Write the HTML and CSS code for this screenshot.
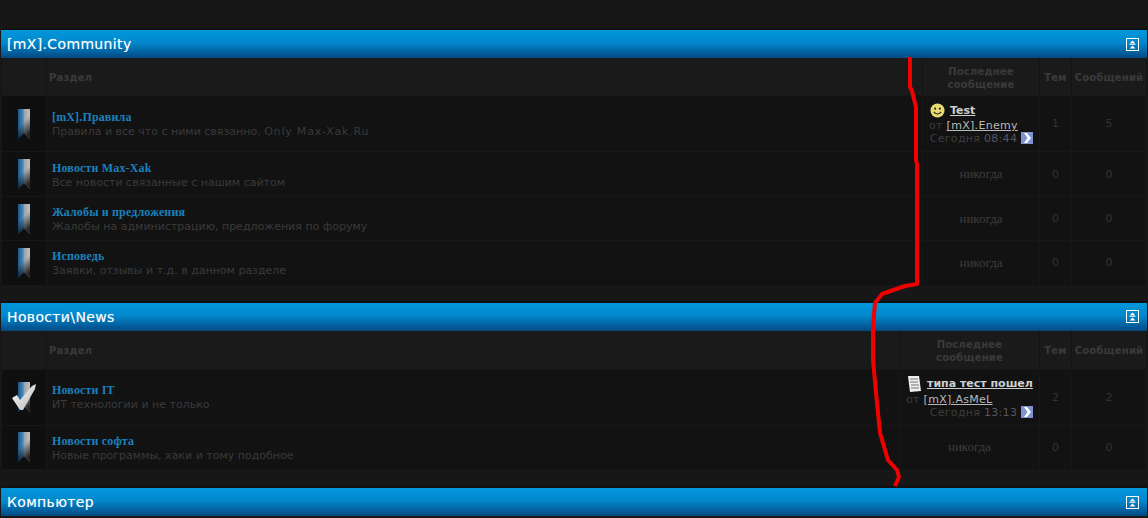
FILE: index.html
```html
<!DOCTYPE html>
<html lang="ru">

<head>
  <meta charset="UTF-8" />
  <title>Форум</title>
  <link rel="stylesheet" href="styles.css">
</head>

<body>
  <svg class="defs" width="0" height="0">
    <defs>
      <linearGradient id="ribbon" x1="0" x2="1" y1="0" y2="0">
        <stop offset="0" stop-color="#17578a" />
        <stop offset="0.42" stop-color="#5288b4" />
        <stop offset="0.55" stop-color="#9aa8b2" />
        <stop offset="1" stop-color="#c0c0c0" />
      </linearGradient>
      <linearGradient id="ribbonFade" x1="0.1" x2="0.45" y1="0.1" y2="1">
        <stop offset="0.45" stop-color="#000" stop-opacity="0" />
        <stop offset="1" stop-color="#000" stop-opacity="0.8" />
      </linearGradient>
      <linearGradient id="checkFill" x1="0" x2="1" y1="0" y2="1">
        <stop offset="0" stop-color="#ffffff" />
        <stop offset="1" stop-color="#b5b5b5" />
      </linearGradient>
      <symbol id="forum-icon" viewBox="0 0 14 30">
        <path d="M1 0H13V30L7 24L1 30Z" fill="url(#ribbon)" />
        <path d="M1 0H13V30L7 24L1 30Z" fill="url(#ribbonFade)" />
      </symbol>
      <symbol id="collapse-icon" viewBox="0 0 13 13">
        <rect x="0.5" y="0.5" width="12" height="12" fill="none" stroke="#fff" />
        <path d="M6.5 2.5L9.5 5.5H3.5ZM3.5 6.2H9.5V7H3.5ZM6.5 7.6L9.5 10.5H3.5Z" fill="#fff" />
      </symbol>
      <symbol id="go-icon" viewBox="0 0 12 12">
        <rect width="12" height="12" fill="#7f93d0" />
        <path d="M3 1H6L10 6L6 11H3L6.5 6Z" fill="#fff" />
      </symbol>
    </defs>
  </svg>

  <section class="category">
    <header class="category-title">
      <h2>[mX].Community</h2>
      <svg class="collapse"><use href="#collapse-icon" /></svg>
    </header>
    <table class="forums">
      <colgroup>
        <col class="col-icon"><col><col class="col-last"><col class="col-topics"><col class="col-posts">
      </colgroup>
      <thead>
        <tr>
          <th></th>
          <th class="th-name">Раздел</th>
          <th>Последнее сообщение</th>
          <th>Тем</th>
          <th>Сообщений</th>
        </tr>
      </thead>
      <tbody>
        <tr class="row-tall">
          <td class="cell-icon"><svg class="ribbon"><use href="#forum-icon" /></svg></td>
          <td class="cell-name">
            <a class="forum-link" href="#">[mX].Правила</a>
            <div class="forum-desc">Правила и все что с ними связанно. <span class="latin">Only Max-Xak.Ru</span></div>
          </td>
          <td class="cell-last">
            <div class="last-title">
              <svg class="smile" viewBox="0 0 16 16">
                <circle cx="8" cy="8" r="7.5" fill="#e8dc70" />
                <circle cx="5.5" cy="6" r="1.1" fill="#222" />
                <circle cx="10.5" cy="6" r="1.1" fill="#222" />
                <path d="M4 9.5Q8 14 12 9.5" fill="none" stroke="#222" stroke-width="1.2" />
              </svg>
              <a class="last-topic" href="#">Test</a>
            </div>
            <div class="last-by">от <a href="#">[mX].Enemy</a></div>
            <div class="last-date">Сегодня <span class="time">08:44</span> <svg class="go"><use href="#go-icon" /></svg></div>
          </td>
          <td class="cell-num">1</td>
          <td class="cell-num">5</td>
        </tr>
        <tr class="row-a">
          <td class="cell-icon"><svg class="ribbon"><use href="#forum-icon" /></svg></td>
          <td class="cell-name">
            <a class="forum-link" href="#">Новости Max-Xak</a>
            <div class="forum-desc">Все новости связанные с нашим сайтом</div>
          </td>
          <td class="cell-never">никогда</td>
          <td class="cell-num">0</td>
          <td class="cell-num">0</td>
        </tr>
        <tr class="row-b">
          <td class="cell-icon"><svg class="ribbon"><use href="#forum-icon" /></svg></td>
          <td class="cell-name">
            <a class="forum-link" href="#">Жалобы и предложения</a>
            <div class="forum-desc">Жалобы на администрацию, предложения по форуму</div>
          </td>
          <td class="cell-never">никогда</td>
          <td class="cell-num">0</td>
          <td class="cell-num">0</td>
        </tr>
        <tr class="row-b">
          <td class="cell-icon"><svg class="ribbon"><use href="#forum-icon" /></svg></td>
          <td class="cell-name">
            <a class="forum-link" href="#">Исповедь</a>
            <div class="forum-desc">Заявки, отзывы и т.д. в данном разделе</div>
          </td>
          <td class="cell-never">никогда</td>
          <td class="cell-num">0</td>
          <td class="cell-num">0</td>
        </tr>
      </tbody>
    </table>
  </section>

  <section class="category category-news">
    <header class="category-title">
      <h2>Новости\News</h2>
      <svg class="collapse"><use href="#collapse-icon" /></svg>
    </header>
    <table class="forums forums-wide">
      <colgroup>
        <col class="col-icon"><col><col class="col-last"><col class="col-topics"><col class="col-posts">
      </colgroup>
      <thead>
        <tr>
          <th></th>
          <th class="th-name">Раздел</th>
          <th>Последнее сообщение</th>
          <th>Тем</th>
          <th>Сообщений</th>
        </tr>
      </thead>
      <tbody>
        <tr class="row-tall">
          <td class="cell-icon">
            <div class="icon-read">
              <svg class="ribbon"><use href="#forum-icon" /></svg>
              <svg class="check" viewBox="0 0 26 28">
                <path d="M1 15L6 12L9 17L21 3L25 1L24 6L12 27H9Z" fill="url(#checkFill)" />
              </svg>
            </div>
          </td>
          <td class="cell-name">
            <a class="forum-link" href="#">Новости IT</a>
            <div class="forum-desc">ИТ технологии и не только</div>
          </td>
          <td class="cell-last">
            <div class="last-title">
              <svg class="doc" viewBox="0 0 15 16">
                <path d="M1 0H12L14 15L3 16Z" fill="#eee" />
                <path d="M3 3H11M3 6H11M4 9H12M4 12H12" stroke="#777" />
              </svg>
              <a class="last-topic" href="#">типа тест пошел</a>
            </div>
            <div class="last-by">от <a href="#">[mX].AsMeL</a></div>
            <div class="last-date">Сегодня <span class="time">13:13</span> <svg class="go"><use href="#go-icon" /></svg></div>
          </td>
          <td class="cell-num">2</td>
          <td class="cell-num">2</td>
        </tr>
        <tr class="row-a">
          <td class="cell-icon"><svg class="ribbon"><use href="#forum-icon" /></svg></td>
          <td class="cell-name">
            <a class="forum-link" href="#">Новости софта</a>
            <div class="forum-desc">Новые программы, хаки и тому подобное</div>
          </td>
          <td class="cell-never">никогда</td>
          <td class="cell-num">0</td>
          <td class="cell-num">0</td>
        </tr>
      </tbody>
    </table>
  </section>

  <section class="category">
    <header class="category-title">
      <h2>Компьютер</h2>
      <svg class="collapse"><use href="#collapse-icon" /></svg>
    </header>
  </section>

  <!-- красная линия поверх скриншота -->
  <svg class="scribble" viewBox="0 0 1148 518">
    <path d="M910 57L910 87L912 91L916 107L916 160L917 164L917 284L905 286L882 294L875 303L873 327L873 360L877 403L880 433L888 460L897 470L899 477L895 486" />
  </svg>
</body>

</html>
```

FILE: styles.css
```css
body {
  margin: 0;
  padding-top: 30px;
  height: 518px;
  box-sizing: border-box;
  overflow: hidden;
  position: relative;
  background: #171717;
  font-family: "DejaVu Sans", Verdana, sans-serif;
  color: #3d3d3d;
}

.defs {
  position: absolute;
}

.category {
  margin: 0 1px 18px;
}

.category-news {
  margin-bottom: 19px;
}

.category-title {
  height: 28px;
  padding: 0 8px 0 6px;
  display: flex;
  align-items: center;
  justify-content: space-between;
  background: linear-gradient(#0297dc 0%, #0288cc 45%, #03609f 80%, #024a80 100%);
  box-shadow: 0 -2px 0 #111;
}

.category-title h2 {
  margin: 0;
  font-size: 14px;
  font-weight: normal;
  letter-spacing: 0.35px;
  color: #fff;
  text-shadow: 0 0 1px rgba(255, 255, 255, 0.4);
}

.collapse {
  width: 13px;
  height: 13px;
}

.forums {
  width: 1146px;
  table-layout: fixed;
  border-collapse: collapse;
}

.col-icon {
  width: 45px;
}

.col-last {
  width: 117px;
}

.forums-wide .col-last {
  width: 140px;
}

.col-topics {
  width: 32px;
}

.col-posts {
  width: 75px;
}

.forums th {
  height: 35px;
  padding: 2px 2px 0;
  background: #1a1a1a;
  border-right: 1px solid #141414;
  border-left: 1px solid #141414;
  font-size: 10px;
  line-height: 13px;
  letter-spacing: 0.2px;
  font-weight: bold;
  color: #3a3a3a;
}

.forums-wide th {
  height: 36px;
}

.forums .th-name {
  padding-left: 2px;
  text-align: left;
}

.forums td {
  padding: 0;
  background: #121212;
  border-top: 1px solid #171717;
  border-right: 1px solid #171717;
  font-size: 11px;
}

.row-tall {
  height: 56px;
}

.row-a {
  height: 45px;
}

.forums-wide .row-a {
  height: 44px;
}

.row-b {
  height: 44px;
}

.forums .cell-icon {
  background: #0f0f0f;
  text-align: center;
}

.ribbon {
  display: block;
  width: 14px;
  height: 30px;
  margin: 0 auto 0 15px;
}

.icon-read {
  position: relative;
}

.check {
  position: absolute;
  left: 9px;
  top: 1px;
  width: 26px;
  height: 28px;
}

.forums .cell-name {
  padding: 2px 0 0 5px;
}

.forums .row-a .cell-name {
  padding-top: 4px;
}

.forum-link {
  font-family: "Liberation Serif", "Times New Roman", serif;
  font-size: 12px;
  line-height: 13px;
  letter-spacing: 0.15px;
  font-weight: bold;
  color: #1a80bd;
  text-decoration: none;
}

.forum-desc {
  line-height: 15px;
  color: #3a3a3a;
}

.latin {
  letter-spacing: 0.8px;
}

.forums .cell-last {
  padding: 0 6px;
  color: #3d3d3d;
  letter-spacing: 0.3px;
}

.last-title {
  display: flex;
  align-items: center;
  gap: 5px;
  height: 16px;
  padding-left: 1px;
  white-space: nowrap;
}

.last-topic {
  font-weight: bold;
  font-size: 11px;
  color: #cfcfcf;
  letter-spacing: 0;
}

.last-by {
  line-height: 15px;
}

.last-by a {
  color: #b8b8b8;
}

.last-date {
  margin-top: -1px;
  line-height: 13px;
  text-align: right;
}

.time {
  color: #555566;
}

.smile {
  width: 15px;
  height: 15px;
  flex: none;
}

.doc {
  width: 15px;
  height: 16px;
  flex: none;
}

.go {
  width: 12px;
  height: 12px;
  vertical-align: -2px;
}

.forums .cell-never {
  text-align: center;
  font-family: "Liberation Serif", "Times New Roman", serif;
  font-size: 13px;
  color: #3d3d3d;
}

.forums .cell-num {
  text-align: center;
  color: #333;
}

.scribble {
  position: absolute;
  left: 0;
  top: 0;
  width: 1148px;
  height: 518px;
  fill: none;
  stroke: #f00000;
  stroke-width: 4;
  stroke-linejoin: round;
  pointer-events: none;
}
```
